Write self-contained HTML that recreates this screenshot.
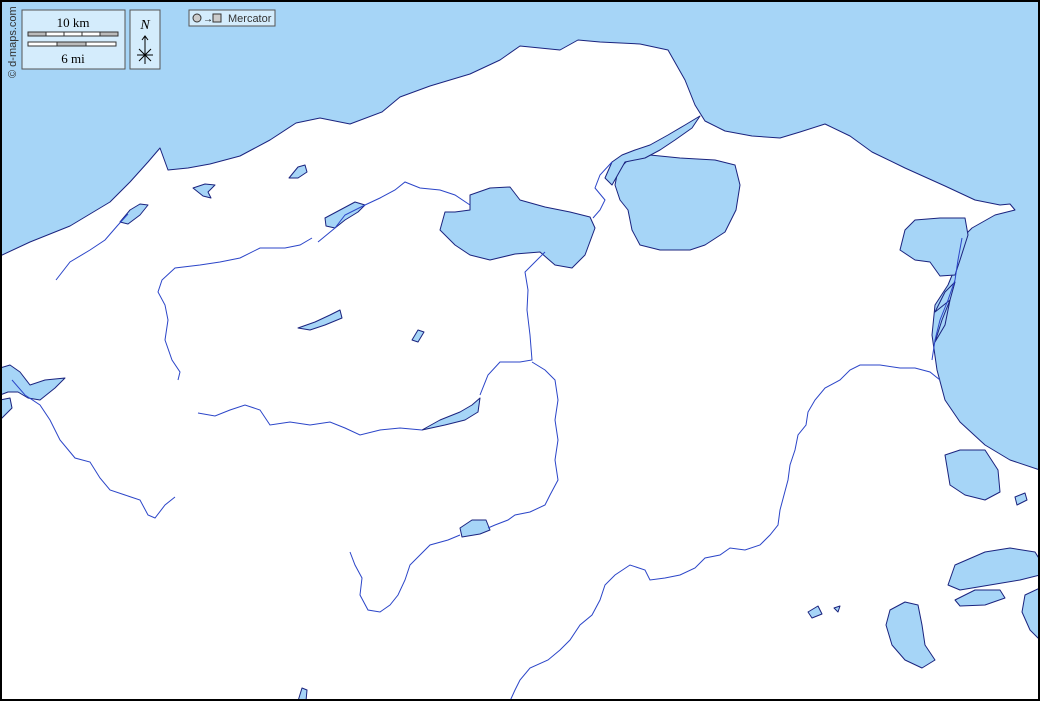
<!DOCTYPE html>
<html><head><meta charset="utf-8"><style>
html,body{margin:0;padding:0;background:#fff}
svg{display:block}
</style></head><body>
<svg width="1040" height="701" viewBox="0 0 1040 701" xmlns="http://www.w3.org/2000/svg" font-family="Liberation Serif, serif">
<rect x="0" y="0" width="1040" height="701" fill="#fff"/>
<g fill="#a6d5f7" stroke="#1a237e" stroke-width="1" stroke-linejoin="round">
<path d="M0,0 H1040 V470 L1010,460 985,445 960,422 945,400 937,370 932,335 935,305 948,285 955,268 960,240 972,228 995,215 1015,210 1010,204 1000,205 975,200 945,186 905,168 872,152 850,136 825,124 800,132 780,138 752,136 725,131 705,121 695,105 685,80 668,50 640,44 600,42 578,40 560,50 540,48 520,46 500,60 470,74 430,86 400,97 382,112 350,124 320,118 296,123 270,140 240,156 210,164 188,168 168,170 160,148 148,162 130,182 110,202 70,226 30,242 0,256 Z"/>
<path d="M628,160 L650,155 680,158 715,160 735,165 740,185 736,210 725,232 705,245 690,250 660,250 640,245 632,230 628,210 620,200 615,185 618,170 Z"/>
<path d="M700,116 L685,125 668,135 650,145 635,150 622,155 612,162 605,178 612,185 625,162 645,158 660,150 675,140 692,128 Z"/>
<path d="M470,195 L490,188 510,187 520,200 545,207 570,212 590,217 595,228 585,255 572,268 555,265 540,252 515,254 490,260 470,255 455,245 440,230 445,212 455,212 470,210 Z"/>
<path d="M905,230 L915,220 940,218 965,218 968,235 960,260 955,275 940,276 930,262 915,260 900,250 Z"/>
<path d="M945,455 L960,450 985,450 998,470 1000,492 985,500 965,495 950,485 Z"/>
<path d="M1015,497 L1025,493 1027,500 1017,505 Z"/>
<path d="M955,565 L985,552 1010,548 1035,552 1040,560 1040,575 1020,580 990,585 960,590 948,585 Z"/>
<path d="M955,600 L975,590 1000,590 1005,598 985,605 960,606 Z"/>
<path d="M1025,595 L1040,588 V640 L1030,630 1022,612 Z"/>
<path d="M890,610 L905,602 918,605 922,625 925,645 935,660 922,668 905,660 892,645 886,625 Z"/>
<path d="M808,612 L818,606 822,614 812,618 Z"/>
<path d="M834,608 L840,606 838,612 Z"/>
<path d="M460,528 L472,520 486,520 490,530 480,534 462,537 Z"/>
<path d="M422,430 L440,420 460,412 472,405 480,398 478,412 465,420 445,425 Z"/>
<path d="M0,368 L10,365 20,372 30,385 45,380 65,378 55,388 40,400 28,398 18,392 8,392 0,395 Z"/>
<path d="M0,400 L10,398 12,408 0,420 Z"/>
<path d="M325,218 L340,210 355,202 365,205 358,212 345,220 335,228 326,226 Z"/>
<path d="M298,328 L315,322 330,315 340,310 342,318 325,325 310,330 Z"/>
<path d="M412,340 L418,330 424,332 418,342 Z"/>
<path d="M289,178 L298,167 305,165 307,172 298,178 Z"/>
<path d="M193,188 L205,184 215,185 208,192 211,198 203,196 Z"/>
<path d="M120,222 L130,210 140,204 148,205 140,215 128,224 Z"/>
<path d="M298,701 L302,688 307,690 306,701 Z"/>
<path d="M935,342 L942,320 950,300 945,325 Z"/>
<path d="M935,312 L945,292 955,282 950,300 Z"/>
</g>
<g fill="none" stroke="#2b45c8" stroke-width="1">
<path d="M56,280 L70,262 90,250 105,240 118,225 128,214"/>
<path d="M312,238 L300,245 285,248 260,248 240,258 220,262 200,265 175,268 162,280 158,292 165,305 168,320 165,340 172,360 180,372 178,380"/>
<path d="M318,242 L335,228 345,215 365,205 380,198 395,190 405,182 420,188 440,190 455,195 470,205"/>
<path d="M12,380 L25,395 40,405 50,420 60,440 75,458 90,462 100,478 110,490 125,495 140,500 148,515 155,518 165,505 175,497"/>
<path d="M198,413 L215,416 230,410 245,405 260,410 270,425 290,422 310,425 330,422 345,428 360,435 380,430 400,428 422,430"/>
<path d="M545,252 L535,262 525,272 528,290 527,310 530,335 532,360 520,362 500,362 488,375 480,395"/>
<path d="M532,362 L545,370 555,380 558,400 555,420 558,440 555,460 558,480 550,495 545,505 530,512 515,515 508,520 495,525 488,528"/>
<path d="M460,535 L448,540 430,545 420,555 410,565 405,580 398,595 390,605 380,612 368,610 360,595 362,578 355,565 350,552"/>
<path d="M940,380 L930,372 915,368 900,368 880,365 860,365 850,370 840,380 825,388 815,400 808,412 806,425 798,435 795,450 790,465 788,480 784,495 780,510 778,525 770,535 760,545 745,550 730,548 720,555 705,558 695,568 680,575 665,578 650,580 645,570 630,565 615,575 605,585 600,600 592,615 580,625 570,640 560,650 548,660 530,668 520,680 515,690 510,701"/>
<path d="M612,162 L600,175 595,188 605,200 600,210 593,218"/>
<path d="M962,238 L958,260 955,280 948,300 940,320 935,340 932,360"/>
</g>
<rect x="22" y="10" width="103" height="59" fill="#d4ecfc" stroke="#555" stroke-width="1"/>
<text x="73" y="27" font-size="13" text-anchor="middle">10 km</text>
<rect x="28" y="32" width="90" height="4" fill="#fff" stroke="#333" stroke-width="1"/>
<rect x="28" y="32" width="18" height="4" fill="#bbb" stroke="#333" stroke-width="1"/>
<rect x="64" y="32" width="18" height="4" fill="#fff" stroke="#333" stroke-width="1"/>
<rect x="100" y="32" width="18" height="4" fill="#bbb" stroke="#333" stroke-width="1"/>
<rect x="28" y="42" width="88" height="4" fill="#fff" stroke="#333" stroke-width="1"/>
<rect x="57" y="42" width="29" height="4" fill="#bbb" stroke="#333" stroke-width="1"/>
<text x="73" y="63" font-size="13" text-anchor="middle">6 mi</text>
<rect x="130" y="10" width="30" height="59" fill="#d4ecfc" stroke="#555" stroke-width="1"/>
<text x="145" y="29" font-size="14" font-style="italic" text-anchor="middle">N</text>
<path d="M145,36 V64 M137,55 H153 M139,49 L151,61 M151,49 L139,61 M142,40 L145,36 148,40" stroke="#000" fill="none" stroke-width="1"/>
<rect x="189" y="10" width="86" height="16" fill="#d4ecfc" stroke="#555" stroke-width="1"/>
<circle cx="197" cy="18" r="4" fill="#ccc" stroke="#333"/>
<text x="203" y="22" font-size="10" font-family="Liberation Sans, sans-serif">→</text>
<rect x="213" y="14" width="8" height="8" fill="#ccc" stroke="#333"/>
<text x="228" y="22" font-size="11" font-family="Liberation Sans, sans-serif" fill="#333">Mercator</text>
<text transform="translate(16,78) rotate(-90)" font-size="11" font-family="Liberation Sans, sans-serif" fill="#333">© d-maps.com</text>
<rect x="1" y="1" width="1038" height="699" fill="none" stroke="#000" stroke-width="2"/>
</svg>
</body></html>
